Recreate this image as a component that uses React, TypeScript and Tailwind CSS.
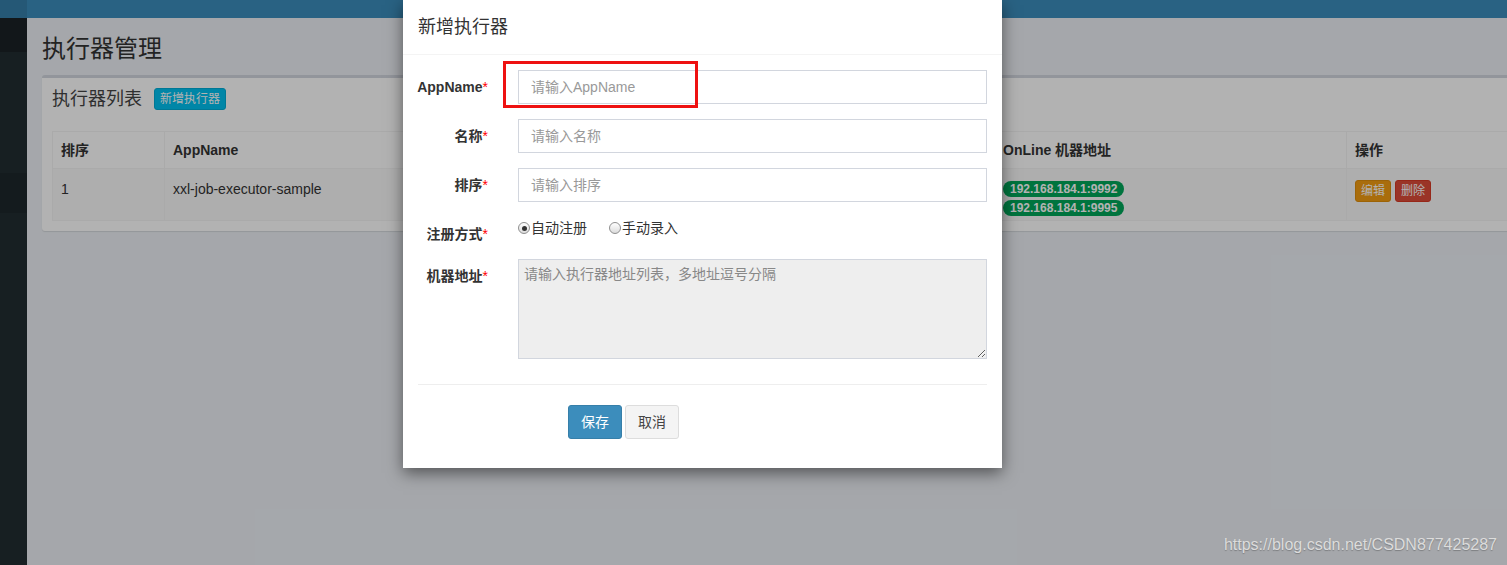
import React from 'react'

const font = '"Liberation Sans", "Noto Sans CJK SC", sans-serif'

const columns = [
  { label: '排序', width: 'w-[112px]' },
  { label: 'AppName', width: 'w-[300px]' },
  { label: '', width: 'w-[280px]' },
  { label: ' ', width: 'w-[250px]' },
  { label: 'OnLine 机器地址', width: 'w-[352px]' },
  { label: '操作', width: 'w-[175px]' },
]

function Radio({ checked }: { checked?: boolean }) {
  return (
    <span className="flex h-[12px] w-[12px] items-center justify-center rounded-full border border-[#8f8f8f] bg-gradient-to-b from-white to-[#dcdcdc]">
      {checked && <span className="h-[5px] w-[5px] rounded-full bg-[#333]" />}
    </span>
  )
}

function Label({ text }: { text: string }) {
  return (
    <div className="w-[100px] shrink-0 pr-[15px] pt-[7px] text-right text-[14px] font-bold leading-[20px] text-[#333]">
      {text}
      <span className="font-normal text-[#ff0000]">*</span>
    </div>
  )
}

function Field({ label, placeholder }: { label: string; placeholder: string }) {
  return (
    <div className="mb-[15px] flex">
      <Label text={label} />
      <div className="flex-1 px-[15px]">
        <input
          placeholder={placeholder}
          className="h-[34px] w-full border border-[#d2d6de] px-[12px] text-[14px] text-[#555] outline-none placeholder:text-[#999]"
        />
      </div>
    </div>
  )
}

export default function App() {
  return (
    <div className="relative h-[565px] w-full overflow-hidden bg-[#ecf0f5]" style={{ fontFamily: font }}>
      {/* top header */}
      <div className="flex h-[18px]">
        <div className="w-[27px] bg-[#367fa9]" />
        <div className="flex-1 bg-[#3c8dbc]" />
      </div>

      <div className="flex">
        {/* sidebar */}
        <aside className="flex h-[547px] w-[27px] shrink-0 flex-col bg-[#222d32]">
          <div className="h-[34px] bg-[#1a2226]" />
          <div className="h-[121px]" />
          <div className="h-[40px] bg-[#1e282c]" />
        </aside>

        <main className="min-w-0 flex-1 px-[15px]">
          <h1 className="pt-[17px] text-[24px] leading-[27px] text-[#333]">执行器管理</h1>

          <section className="mt-[13px] w-[1490px] rounded-[3px] border-t-[3px] border-[#d2d6de] bg-white shadow-[0_1px_1px_rgba(0,0,0,0.1)]">
            <div className="flex items-center p-[10px]">
              <h3 className="text-[18px] leading-[22px] text-[#444]">执行器列表</h3>
              <button className="ml-[12px] h-[22px] rounded-[3px] border border-[#00acd6] bg-[#00c0ef] px-[5px] text-[12px] leading-[18px] text-white">
                新增执行器
              </button>
            </div>
            <div className="px-[10px] pb-[10px] pt-[11px]">
              <table className="w-full table-fixed border-collapse border border-[#f4f4f4] text-[14px] text-[#333]">
                <thead>
                  <tr className="h-[37px]">
                    {columns.map((c) => (
                      <th key={c.label} className={`${c.width} border border-[#f4f4f4] px-[8px] text-left font-bold`}>
                        {c.label}
                      </th>
                    ))}
                  </tr>
                </thead>
                <tbody>
                  <tr className="h-[52px] bg-[#f9f9f9] align-top">
                    <td className="border border-[#f4f4f4] p-[8px] pt-[10px] leading-[20px]">1</td>
                    <td className="border border-[#f4f4f4] p-[8px] pt-[10px] leading-[20px]">xxl-job-executor-sample</td>
                    <td className="border border-[#f4f4f4] p-[8px]" />
                    <td className="border border-[#f4f4f4] p-[8px]" />
                    <td className="border border-[#f4f4f4] px-[8px] pt-[12px]">
                      <div className="flex flex-col items-start gap-[3px]">
                        {['192.168.184.1:9992', '192.168.184.1:9995'].map((a) => (
                          <span
                            key={a}
                            className="h-[16px] rounded-full bg-[#00a65a] px-[7px] text-[12px] font-bold leading-[16px] text-white"
                          >
                            {a}
                          </span>
                        ))}
                      </div>
                    </td>
                    <td className="border border-[#f4f4f4] p-[8px]">
                      <div className="mt-[3px] flex gap-[4px]">
                        <button className="h-[22px] rounded-[3px] border border-[#e08e0b] bg-[#f39c12] px-[5px] text-[12px] leading-[18px] text-white">
                          编辑
                        </button>
                        <button className="h-[22px] rounded-[3px] border border-[#d73925] bg-[#dd4b39] px-[5px] text-[12px] leading-[18px] text-white">
                          删除
                        </button>
                      </div>
                    </td>
                  </tr>
                </tbody>
              </table>
            </div>
          </section>
        </main>
      </div>

      {/* modal backdrop */}
      <div className="absolute inset-0 bg-black/30" />

      {/* modal */}
      <div className="absolute left-[403px] top-0 h-[468px] w-[599px] bg-white shadow-[0_5px_15px_rgba(0,0,0,0.5)]">
        <div className="flex h-[55px] items-center border-b border-[#f4f4f4] px-[15px]">
          <h4 className="text-[18px] leading-[24px] text-[#333]">新增执行器</h4>
        </div>
        <div className="pt-[15px]">
          <Field label="AppName" placeholder="请输入AppName" />
          <Field label="名称" placeholder="请输入名称" />
          <Field label="排序" placeholder="请输入排序" />

          <div className="mb-[15px] flex h-[27px]">
            <Label text="注册方式" />
            <div className="flex flex-1 items-start px-[15px] pt-[1px]">
              <label className="flex h-[20px] items-center text-[14px] text-[#333]">
                <Radio checked />
                <span className="ml-[1px]">自动注册</span>
              </label>
              <label className="ml-[22px] flex h-[20px] items-center text-[14px] text-[#333]">
                <Radio />
                <span className="ml-[1px]">手动录入</span>
              </label>
            </div>
          </div>

          <div className="mb-[15px] flex">
            <Label text="机器地址" />
            <div className="flex-1 px-[15px]">
              <textarea
                readOnly
                placeholder="请输入执行器地址列表，多地址逗号分隔"
                className="block h-[100px] w-full resize-y border border-[#d2d6de] bg-[#eee] px-[5px] pt-[5px] text-[14px] leading-[18px] outline-none placeholder:text-[#888]"
              />
            </div>
          </div>

          <hr className="mx-[15px] mt-[25px] border-t border-[#eee]" />

          <div className="ml-[165px] mt-[20px] flex gap-[3px]">
            <button className="h-[34px] rounded-[3px] border border-[#367fa9] bg-[#3c8dbc] px-[12px] text-[14px] text-white">
              保存
            </button>
            <button className="h-[34px] rounded-[3px] border border-[#ddd] bg-[#f4f4f4] px-[12px] text-[14px] text-[#444]">
              取消
            </button>
          </div>
        </div>
      </div>

      {/* annotation */}
      <div className="absolute left-[503px] top-[61px] h-[47px] w-[195px] border-[3px] border-[#ee1111]" />

      {/* watermark */}
      <div className="absolute right-[10px] top-[536px] text-[16px] leading-[18px] text-[#dcdcdc] [text-shadow:0_1px_1px_rgba(0,0,0,0.25)]">
        https://blog.csdn.net/CSDN877425287
      </div>
    </div>
  )
}
